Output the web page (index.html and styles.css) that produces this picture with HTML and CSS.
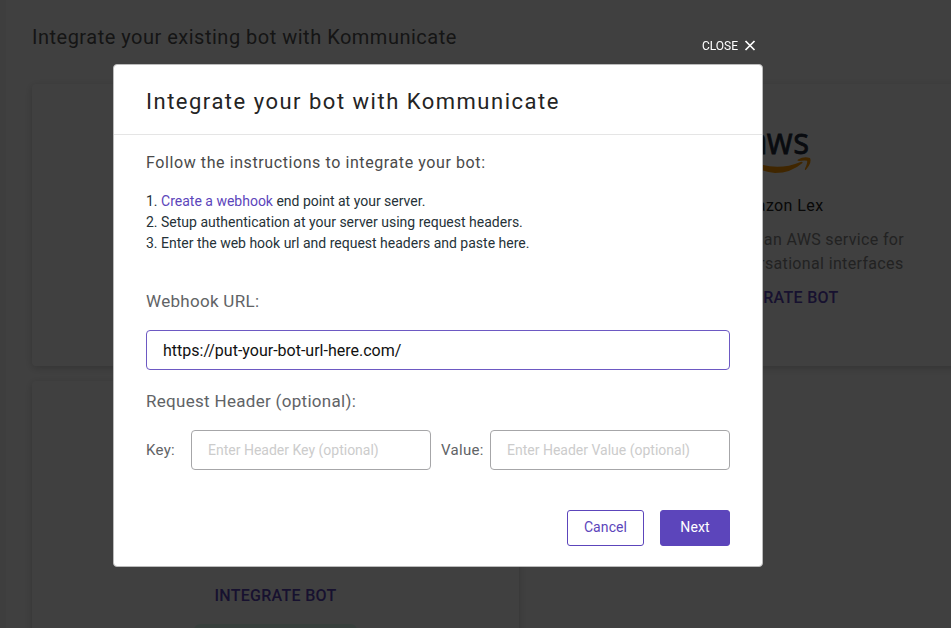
FILE: index.html
```
<!DOCTYPE html>
<html lang="en">
<head>
<meta charset="utf-8">
<title>Bot integrations</title>
<link rel="stylesheet" href="styles.css">
</head>
<body>
<main class="page">
  <h1 class="page-title">Integrate your existing bot with Kommunicate</h1>
  <div class="cards">
    <section class="card"></section>
    <section class="card lex">
      <svg class="aws" width="66" height="44" viewBox="0 0 66 44">
        <text class="aws-name" transform="translate(4 23) scale(.9 1)" x="0" y="0" dx="0 -.8 .8">aws</text>
        <path d="M3 28 Q29 42 55.500 31 Q58 30 57.500 32 Q46 42 30 42 Q14 41 2 30 Q1 28 3 28Z" fill="#f90"/>
        <path d="M53 28.500 Q59 25 65 27 Q67.500 31 60.800 39 Q59.500 39.500 60 37.500 Q63 31 62 29.700 Q59 29 54 30 Q51.500 29.500 53 28.500Z" fill="#f90"/>
      </svg>
      <h2 class="card-name">Amazon Lex</h2>
      <p class="card-text">Amazon Lex is an AWS service for<br>building conversational interfaces</p>
      <a class="card-link">INTEGRATE BOT</a>
    </section>
    <section class="card second">
      <a class="card-link">INTEGRATE BOT</a>
      <span class="badge"></span>
    </section>
  </div>
</main>
<div class="overlay">
  <div class="dialog">
    <button class="close">CLOSE
      <svg width="12" height="12" viewBox="0 0 12 12"><path d="M1.500 1 10.500 10M10.500 1 1.500 10" stroke="#fff" stroke-width="1.700"/></svg>
    </button>
    <div class="modal">
      <header class="modal-head"><h2>Integrate your bot with Kommunicate</h2></header>
      <div class="modal-body">
        <p class="lead">Follow the instructions to integrate your bot:</p>
        <div class="steps">
          <p>1. <a>Create a webhook</a> end point at your server.</p>
          <p>2. Setup authentication at your server using request headers.</p>
          <p>3. Enter the web hook url and request headers and paste here.</p>
        </div>
        <label class="label url-label" for="url">Webhook URL:</label>
        <input class="field url" id="url" value="https://put-your-bot-url-here.com/">
        <p class="label header-label">Request Header (optional):</p>
        <div class="pair">
          <label class="key" for="key">Key:</label>
          <input class="field" id="key" placeholder="Enter Header Key (optional)">
          <label class="value" for="value">Value:</label>
          <input class="field" id="value" placeholder="Enter Header Value (optional)">
        </div>
        <div class="actions">
          <button class="btn">Cancel</button>
          <button class="btn primary">Next</button>
        </div>
      </div>
    </div>
  </div>
</div>
</body>
</html>
```
FILE: styles.css
```
* { box-sizing: border-box; margin: 0; padding: 0; }
html, body { height: 100%; overflow: hidden; }
body { font-family: Roboto, "Liberation Sans", sans-serif; background: #fff; color: #242424; }
.page { height: 628px; overflow: hidden; padding: 24px 0 0 32px; box-shadow: inset 6px 0 0 #f6f6f6; }
.page-title { font-size: 20px; line-height: 26px; font-weight: 400; letter-spacing: .5px; white-space: nowrap; color: #555; }
.cards { display: grid; grid-template-columns: 487px 487px; grid-template-rows: 282px 282px; gap: 15px; margin-top: 34px; }
.card { background: #fff; border-radius: 4px; box-shadow: 0 2px 8px rgba(0,0,0,.2); display: flex; flex-direction: column; align-items: center; text-align: center; }
.lex { padding-top: 47px; }
.aws { overflow: visible; }
.aws-name { font-family: "Open Sans", sans-serif; font-size: 37px; font-weight: 500; fill: #252f3e; stroke: #252f3e; stroke-width: .8px; }
.card-name { font-size: 16px; line-height: 24px; font-weight: 400; letter-spacing: .4px; margin-top: 19px; }
.card-text { font-size: 16px; line-height: 24px; letter-spacing: .35px; color: #888; margin-top: 10px; }
.card-link { font-size: 16px; line-height: 20px; font-weight: 500; letter-spacing: .3px; color: #5c45bb; margin-top: 12px; }
.second { padding-top: 193px; }
.badge { width: 163px; height: 24px; margin-top: 18px; border-radius: 6px; background: #e0fbf0; }
.overlay { position: fixed; inset: 0; display: flex; align-items: flex-start; padding: 38px 0 0 113px; background: rgba(0,0,0,.75); }
.dialog { width: 650px; display: flex; flex-direction: column; }
.close { display: flex; align-items: center; align-self: flex-end; gap: 6px; height: 15px; margin-right: 7px; border: 0; background: none; color: #fff; font: 12px/15px Roboto, sans-serif; padding-top: 1px; }
.modal { height: 503px; margin-top: 11px; background: #fff; border: 1px solid #bbb; border-radius: 4px; }
.modal-head { height: 70px; padding: 22px 32px 0; border-bottom: 1px solid #e5e5e5; }
.modal-head h2 { font-size: 22px; line-height: 30px; font-weight: 400; letter-spacing: 1.5px; white-space: nowrap; }
.modal-body { padding: 17px 32px 0; }
.lead { font-size: 16px; line-height: 22px; letter-spacing: .59px; color: #4a4a4a; }
.steps { margin-top: 17px; font-size: 14px; line-height: 21px; color: #263238; }
.steps a { color: #5c45bb; }
.label { display: block; font-size: 17px; line-height: 24px; letter-spacing: .3px; color: #616366; }
.url-label { margin-top: 35px; }
.field { min-width: 0; width: 240px; height: 40px; padding: 0 16px; border: 1px solid #a6a6a8; border-radius: 4px; font: 14px Roboto, sans-serif; letter-spacing: 0; color: #111; outline: 0; }
.field::placeholder { color: #ccc; opacity: 1; }
.url { width: 584px; margin-top: 17px; font-size: 16px; border-color: #6d59c3; }
.header-label { margin-top: 19px; }
.pair { display: flex; align-items: center; margin-top: 17px; font-size: 15px; letter-spacing: .3px; color: #616366; }
.key { width: 45px; }
.value { width: 59px; padding-left: 10px; }
.actions { display: flex; justify-content: flex-end; gap: 16px; margin-top: 40px; }
.btn { width: 77px; height: 36px; padding-bottom: 2px; border: 1px solid #5c45bb; border-radius: 3px; background: #fff; color: #5c45bb; font: 14px Roboto, sans-serif; letter-spacing: .1px; }
.primary { width: 70px; background: #5c45bb; color: #fff; }
```
